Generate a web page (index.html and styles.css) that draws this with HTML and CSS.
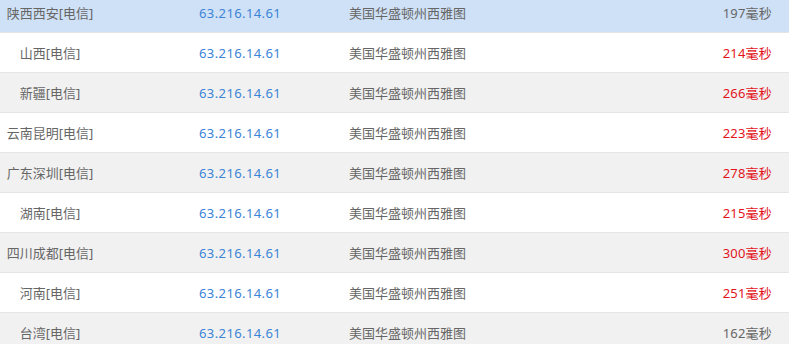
FILE: index.html
```html
<!DOCTYPE html>
<html lang="zh-CN">
<head>
<meta charset="utf-8">
<title>Ping</title>
<link rel="stylesheet" href="styles.css">
</head>
<body>
<div class="list">
  <div class="row active"><span class="node">陕西西安[电信]</span><span class="ip">63.216.14.61</span><span class="loc">美国华盛顿州西雅图</span><span class="ms">197毫秒</span></div>
  <div class="row"><span class="node">山西[电信]</span><span class="ip">63.216.14.61</span><span class="loc">美国华盛顿州西雅图</span><span class="ms slow">214毫秒</span></div>
  <div class="row"><span class="node">新疆[电信]</span><span class="ip">63.216.14.61</span><span class="loc">美国华盛顿州西雅图</span><span class="ms slow">266毫秒</span></div>
  <div class="row"><span class="node">云南昆明[电信]</span><span class="ip">63.216.14.61</span><span class="loc">美国华盛顿州西雅图</span><span class="ms slow">223毫秒</span></div>
  <div class="row"><span class="node">广东深圳[电信]</span><span class="ip">63.216.14.61</span><span class="loc">美国华盛顿州西雅图</span><span class="ms slow">278毫秒</span></div>
  <div class="row"><span class="node">湖南[电信]</span><span class="ip">63.216.14.61</span><span class="loc">美国华盛顿州西雅图</span><span class="ms slow">215毫秒</span></div>
  <div class="row"><span class="node">四川成都[电信]</span><span class="ip">63.216.14.61</span><span class="loc">美国华盛顿州西雅图</span><span class="ms slow">300毫秒</span></div>
  <div class="row"><span class="node">河南[电信]</span><span class="ip">63.216.14.61</span><span class="loc">美国华盛顿州西雅图</span><span class="ms slow">251毫秒</span></div>
  <div class="row"><span class="node">台湾[电信]</span><span class="ip">63.216.14.61</span><span class="loc">美国华盛顿州西雅图</span><span class="ms">162毫秒</span></div>
</div>
</body>
</html>
```
FILE: styles.css
```css
html, body {
  margin: 0;
  padding: 0;
  background: #fff;
}
body {
  font-family: "Noto Sans", "Noto Sans CJK SC", sans-serif;
  font-size: 13px;
  color: #666;
  overflow: hidden;
}
.list {
  margin-top: -7px;
}
.row {
  display: grid;
  grid-template-columns: 100px 150px 1fr 140px;
  align-items: center;
  height: 39px;
  border-bottom: 1px solid #e5e5e5;
  background: #fff;
}
.row:nth-child(even) {
  background: #fff;
}
.row:nth-child(odd) {
  background: #f1f1f1;
}
.row.active {
  background: #cfe1f6;
}
.node {
  text-align: center;
}
.ip {
  padding-left: 99px;
  color: #3b84d6;
  white-space: nowrap;
  letter-spacing: 0.4px;
}
.loc {
  padding-left: 99px;
  white-space: nowrap;
}
.ms {
  text-align: right;
  padding-right: 17px;
  letter-spacing: 0.2px;
}
.ms.slow {
  color: #e3131b;
}
```
